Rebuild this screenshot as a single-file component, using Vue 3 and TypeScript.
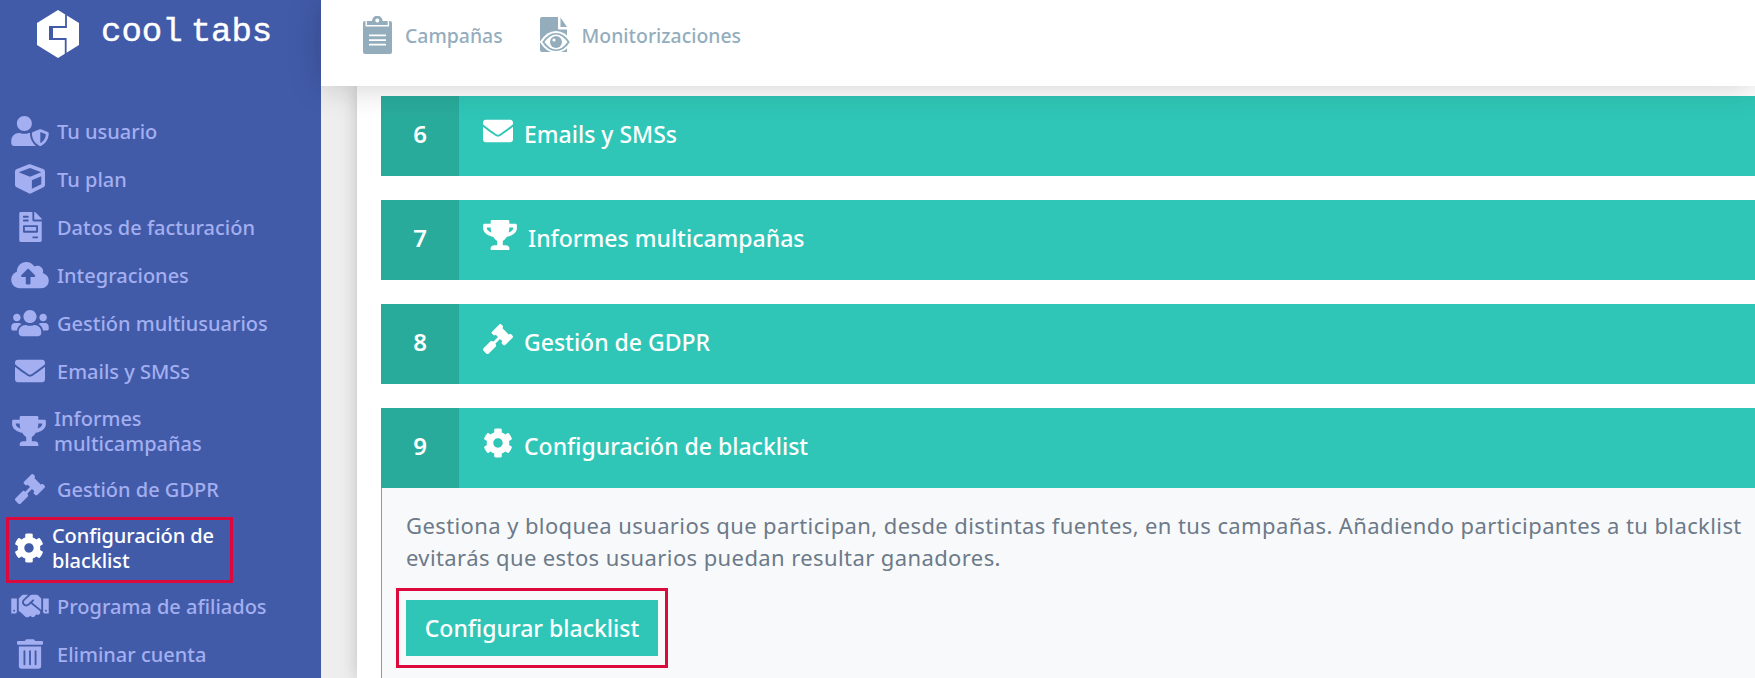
<template>
  <div class="page">
    <aside class="sidebar">
      <div class="logo">
        <svg class="logo-mark" viewBox="0 0 42 48">
          <path fill="#fff" d="M21 0 42 13V35L21 48 0 35V13Z" />
          <path fill="none" stroke="#425ba9" stroke-width="1.8" d="M29 4.500V17H13.500V29H28.700V44" />
          <path fill="#425ba9" d="M12 16H16V30H12Z" />
        </svg>
        <span class="logo-text">cool</span>
        <span class="logo-text second">tabs</span>
      </div>
      <nav class="menu">
        <a
          v-for="item in menu"
          :key="item.label"
          class="menu-item"
          :class="{ active: item.active, double: item.double }"
        >
          <span class="menu-icon">
            <svg :viewBox="`0 0 ${icons[item.icon].w} 512`" :style="{ width: iconWidth(item.icon) + 'px' }">
              <path fill="currentColor" :d="icons[item.icon].d" />
            </svg>
          </span>
          <span class="menu-label" v-html="item.label"></span>
          <span v-if="item.active" class="mark"></span>
        </a>
      </nav>
    </aside>

    <div class="main">
      <header class="topbar">
        <a class="top-link">
          <svg class="top-icon clip" viewBox="0 0 29 38">
            <path fill="#93adbd" fill-rule="evenodd" d="M9 5a5.300 5.300 0 0 1 10.600 0H27a2 2 0 0 1 2 2v29a2 2 0 0 1-2 2H2a2 2 0 0 1-2-2V7a2 2 0 0 1 2-2ZM14.300 2.500a2 2 0 1 0 0 4 2 2 0 0 0 0-4Z" />
            <path fill="none" stroke="#fff" stroke-width="1.400" d="M3.200 5V9.800H25.400V5" />
            <path fill="#fff" d="M6 18.500H23V20.300H6ZM6 23.200H23V25H6ZM6 27.800H23V29.600H6Z" />
          </svg>
          Campañas
        </a>
        <a class="top-link">
          <svg class="top-icon doc" viewBox="0 0 32 38">
            <path fill="#93adbd" d="M2 1H18V12.500a1 1 0 0 0 1 1H27V36H2a2 2 0 0 1-2-2V3a2 2 0 0 1 2-2Z" />
            <path fill="#93adbd" d="M20.500 1.500 27 11H20.500Z" />
            <path fill="#93adbd" stroke="#fff" stroke-width="2" d="M1 26C5 19.500 10 16 16 16S27 19.500 31 26C27 32.500 22 36 16 36S5 32.500 1 26Z" />
            <path fill="#fff" d="M4.500 26C8 21 12 18.500 16 18.500S24 21 27.500 26C24 31 20 33.500 16 33.500S8 31 4.500 26Z" />
            <circle cx="16" cy="26" r="6" fill="#93adbd" />
            <circle cx="14" cy="24" r="1.600" fill="#fff" />
          </svg>
          Monitorizaciones
        </a>
      </header>

      <div class="body">
        <div class="gutter"></div>
        <section class="content">
          <div v-for="step in steps" :key="step.num" class="step">
            <div class="step-num">{{ step.num }}</div>
            <div class="step-title">
              <svg :viewBox="`0 0 ${icons[step.icon].w} 512`" :style="{ width: iconWidth(step.icon) + 'px' }">
                <path fill="#fff" :d="icons[step.icon].d" />
              </svg>
              <span>{{ step.title }}</span>
            </div>
          </div>
          <div class="panel">
            <p class="panel-text">
              Gestiona y bloquea usuarios que participan, desde distintas fuentes, en tus campañas. Añadiendo participantes a tu blacklist<br />evitarás que estos usuarios puedan resultar ganadores.
            </p>
            <div class="btn-mark">
              <button class="btn">Configurar blacklist</button>
            </div>
          </div>
        </section>
      </div>
    </div>
  </div>
</template>

<script setup lang="ts">
interface Icon { w: number; d: string }

const icons: Record<string, Icon> = {
  userShield: { w: 640, d: 'M622.3 271.1l-115.2-45c-4.1-1.6-12.6-3.7-22.2 0l-115.2 45c-10.7 4.2-17.7 14-17.7 24.9 0 111.6 68.7 188.8 132.9 213.9 9.6 3.7 18 1.6 22.2 0C558.4 489.9 640 420.5 640 296c0-10.9-7-20.7-17.7-24.9zM496 462.4V273.3l95.5 37.3c-5.6 87.1-60.9 135.4-95.5 151.8zM224 256c70.7 0 128-57.3 128-128S294.7 0 224 0 96 57.3 96 128s57.3 128 128 128zm96 40c0-2.5.8-4.7 1.1-7.2-2.5-.1-4.9-.8-7.5-.8h-16.7c-22.2 10.2-46.9 16-72.9 16s-50.6-5.8-72.9-16h-16.7C60.2 288 0 348.2 0 422.4V464c0 26.5 21.5 48 48 48h352c6.8 0 13.3-1.5 19.2-4-54-42.9-99.2-116.7-99.2-212z' },
  cube: { w: 512, d: 'M239.1 6.3l-208 78c-18.7 7-31.1 25-31.1 45v225.1c0 18.2 10.3 34.8 26.5 42.9l208 104c13.5 6.8 29.4 6.8 42.9 0l208-104c16.3-8.1 26.5-24.8 26.5-42.9V129.3c0-20-12.4-37.9-31.1-44.9l-208-78C262 2.2 250 2.2 239.1 6.3zM256 68.4l192 72v1.1l-192 78-192-78v-1.1l192-72zm32 356V275.5l160-65v133.9l-160 80z' },
  invoice: { w: 384, d: 'M288 256H96v64h192v-64zm89-151L279.1 7c-4.5-4.5-10.6-7-17-7H256v128h128v-6.1c0-6.3-2.5-12.4-7-16.9zm-153 31V0H24C10.7 0 0 10.7 0 24v464c0 13.3 10.7 24 24 24h336c13.3 0 24-10.7 24-24V160H248c-13.2 0-24-10.8-24-24zM64 72c0-4.42 3.58-8 8-8h80c4.42 0 8 3.58 8 8v16c0 4.42-3.58 8-8 8H72c-4.42 0-8-3.58-8-8V72zm0 64c0-4.42 3.58-8 8-8h80c4.42 0 8 3.58 8 8v16c0 4.42-3.58 8-8 8H72c-4.42 0-8-3.58-8-8v-16zm256 304c0 4.42-3.58 8-8 8h-80c-4.42 0-8-3.58-8-8v-16c0-4.42 3.58-8 8-8h80c4.42 0 8 3.58 8 8v16zm0-200v96c0 8.84-7.16 16-16 16H80c-8.84 0-16-7.16-16-16v-96c0-8.84 7.16-16 16-16h224c8.84 0 16 7.16 16 16z' },
  cloud: { w: 640, d: 'M537.6 226.6c4.1-10.7 6.4-22.4 6.4-34.6 0-53-43-96-96-96-19.7 0-38.1 6-53.3 16.2C367 64.2 315.3 32 256 32c-88.4 0-160 71.6-160 160 0 2.7.1 5.4.2 8.1C40.2 219.8 0 273.2 0 336c0 79.5 64.5 144 144 144h368c70.7 0 128-57.3 128-128 0-61.9-44-113.6-102.4-125.4zM393.4 288H328v112c0 8.8-7.2 16-16 16h-48c-8.8 0-16-7.2-16-16V288h-65.4c-14.3 0-21.4-17.2-11.3-27.3l105.4-105.4c6.2-6.2 16.4-6.2 22.6 0l105.4 105.4c10.1 10.1 2.9 27.3-11.3 27.3z' },
  users: { w: 640, d: 'M96 224c35.3 0 64-28.7 64-64s-28.7-64-64-64-64 28.7-64 64 28.7 64 64 64zm448 0c35.3 0 64-28.7 64-64s-28.7-64-64-64-64 28.7-64 64 28.7 64 64 64zm32 32h-64c-17.6 0-33.5 7.1-45.1 18.6 40.3 22.1 68.9 62 75.1 109.4h66c17.7 0 32-14.3 32-32v-32c0-35.3-28.7-64-64-64zm-256 0c61.9 0 112-50.1 112-112S381.9 32 320 32 208 82.1 208 144s50.1 112 112 112zm76.8 32h-8.3c-20.8 10-43.9 16-68.5 16s-47.6-6-68.5-16h-8.3C179.6 288 128 339.6 128 403.2V432c0 26.5 21.5 48 48 48h288c26.5 0 48-21.5 48-48v-28.8c0-63.6-51.6-115.2-115.2-115.2zm-223.7-13.4C161.5 263.1 145.6 256 128 256H64c-35.3 0-64 28.7-64 64v32c0 17.7 14.3 32 32 32h65.9c6.3-47.4 34.9-87.3 75.2-109.4z' },
  envelope: { w: 512, d: 'M502.3 190.8c3.9-3.1 9.7-.2 9.7 4.7V400c0 26.5-21.5 48-48 48H48c-26.5 0-48-21.5-48-48V195.6c0-5 5.7-7.8 9.7-4.7 22.4 17.4 52.1 39.5 154.1 113.6 21.1 15.4 56.7 47.8 92.2 47.6 35.7.3 72-32.8 92.3-47.6 102-74.1 131.6-96.3 154-113.7zM256 320c23.2.4 56.6-29.2 73.4-41.4 132.7-96.3 142.8-104.7 173.4-128.7 5.8-4.5 9.2-11.5 9.2-18.9v-19c0-26.5-21.5-48-48-48H48C21.5 64 0 85.5 0 112v19c0 7.4 3.4 14.3 9.2 18.9 30.6 23.9 40.7 32.4 173.4 128.7 16.8 12.2 50.2 41.8 73.4 41.4z' },
  trophy: { w: 576, d: 'M552 64H448V24c0-13.3-10.7-24-24-24H152c-13.3 0-24 10.7-24 24v40H24C10.7 64 0 74.7 0 88v56c0 35.7 22.5 72.4 61.9 100.7 31.5 22.7 69.8 37.1 110 41.7C203.3 338.5 240 360 240 360v72h-48c-35.3 0-64 20.7-64 56v12c0 6.6 5.4 12 12 12h296c6.6 0 12-5.4 12-12v-12c0-35.3-28.7-56-64-56h-48v-72s36.7-21.5 68.1-73.6c40.3-4.6 78.6-19 110-41.7 39.3-28.3 61.9-65 61.9-100.7V88c0-13.3-10.7-24-24-24zM99.3 192.8C74.9 175.2 64 155.6 64 144v-16h64.2c1 32.6 5.8 61.2 12.8 86.2-15.1-5.2-29.2-12.4-41.7-21.4zM512 144c0 16.1-17.7 36.1-35.3 48.8-12.5 9-26.7 16.2-41.8 21.4 7-25 11.8-53.6 12.8-86.2H512v16z' },
  gavel: { w: 512, d: 'M504.971 199.362l-22.627-22.627c-9.373-9.373-24.569-9.373-33.941 0l-5.657 5.657L329.608 69.255l5.657-5.657c9.373-9.373 9.373-24.569 0-33.941L312.638 7.029c-9.373-9.373-24.569-9.373-33.941 0L154.246 131.48c-9.373 9.373-9.373 24.569 0 33.941l22.627 22.627c9.373 9.373 24.569 9.373 33.941 0l5.657-5.657 39.598 39.598-81.04 81.04-5.657-5.657c-12.497-12.497-32.758-12.497-45.255 0L9.373 412.118c-12.497 12.497-12.497 32.758 0 45.255l45.255 45.255c12.497 12.497 32.758 12.497 45.255 0l114.745-114.745c12.497-12.497 12.497-32.758 0-45.255l-5.657-5.657 81.04-81.04 39.598 39.598-5.657 5.657c-9.373 9.373-9.373 24.569 0 33.941l22.627 22.627c9.373 9.373 24.569 9.373 33.941 0l124.451-124.451c9.372-9.372 9.372-24.568 0-33.941z' },
  cog: { w: 512, d: 'M487.4 315.7l-42.6-24.6c4.3-23.2 4.3-47 0-70.2l42.6-24.6c4.9-2.8 7.1-8.6 5.5-14-11.1-35.6-30-67.8-54.7-94.6-3.8-4.1-10-5.1-14.8-2.3L380.8 110c-17.9-15.4-38.5-27.3-60.8-35.1V25.8c0-5.6-3.9-10.5-9.4-11.7-36.7-8.2-74.3-7.8-109.2 0-5.5 1.2-9.4 6.1-9.4 11.7V75c-22.2 7.9-42.8 19.8-60.8 35.1L88.7 85.5c-4.9-2.8-11-1.9-14.8 2.3-24.7 26.7-43.6 58.9-54.7 94.6-1.7 5.4.6 11.2 5.5 14L67.3 221c-4.3 23.2-4.3 47 0 70.2l-42.6 24.6c-4.9 2.8-7.1 8.6-5.5 14 11.1 35.6 30 67.8 54.7 94.6 3.8 4.1 10 5.1 14.8 2.3l42.6-24.6c17.9 15.4 38.5 27.3 60.8 35.1v49.2c0 5.6 3.9 10.5 9.4 11.7 36.7 8.2 74.3 7.8 109.2 0 5.5-1.2 9.4-6.1 9.4-11.7v-49.2c22.2-7.9 42.8-19.8 60.8-35.1l42.6 24.6c4.9 2.8 11 1.9 14.8-2.3 24.7-26.7 43.6-58.9 54.7-94.6 1.5-5.5-.7-11.3-5.6-14.1zM256 336c-44.1 0-80-35.9-80-80s35.9-80 80-80 80 35.9 80 80-35.9 80-80 80z' },
  handshake: { w: 640, d: 'M434.7 64h-85.9c-8 0-15.7 3-21.6 8.4l-98.3 90c-.1.1-.2.3-.3.4-16.6 15.6-16.3 40.5-2.1 56 12.7 13.9 39.4 17.6 56.1 2.7.1-.1.3-.1.4-.2l79.9-73.2c6.5-5.9 16.7-5.5 22.6 1 6 6.5 5.5 16.6-1 22.6l-26.1 23.9L504 313.8c2.9 2.4 5.5 5 7.9 7.7V128l-54.6-54.6c-5.9-6-14.1-9.4-22.6-9.4zM544 128.2v223.9c0 17.7 14.3 32 32 32h64V128.2h-96zm48 223.9c-8.8 0-16-7.2-16-16s7.2-16 16-16 16 7.2 16 16-7.2 16-16 16zM0 384h64c17.7 0 32-14.3 32-32V128.2H0V384zm48-63.9c8.8 0 16 7.2 16 16s-7.2 16-16 16-16-7.2-16-16c0-8.9 7.2-16 16-16zm435.9 18.6L334.6 217.5l-30 27.5c-29.7 27.1-75.2 24.5-101.7-4.4-26.9-29.4-24.8-74.9 4.4-101.7L289.1 64h-83.8c-8.5 0-16.6 3.4-22.6 9.4L128 128v223.9h18.3l90.5 81.9c27.4 22.3 67.7 18.1 90-9.3l.2-.2 17.9 15.5c15.9 13 39.4 10.5 52.3-5.4l31.4-38.6 5.4 4.4c13.7 11.1 33.9 9.1 45-4.7l9.5-11.7c11.2-13.8 9.1-33.9-4.6-45.1z' },
  trash: { w: 448, d: 'M32 464a48 48 0 0 0 48 48h288a48 48 0 0 0 48-48V128H32zm272-256a16 16 0 0 1 32 0v224a16 16 0 0 1-32 0zm-96 0a16 16 0 0 1 32 0v224a16 16 0 0 1-32 0zm-96 0a16 16 0 0 1 32 0v224a16 16 0 0 1-32 0zM432 32H312l-9.4-18.7A24 24 0 0 0 281.1 0H166.8a23.72 23.72 0 0 0-21.4 13.3L136 32H16A16 16 0 0 0 0 48v32a16 16 0 0 0 16 16h416a16 16 0 0 0 16-16V48a16 16 0 0 0-16-16z' },
}

const iconWidth = (name: string) => Math.round((icons[name].w / 512) * 30)

const menu = [
  { label: 'Tu usuario', icon: 'userShield' },
  { label: 'Tu plan', icon: 'cube' },
  { label: 'Datos de facturación', icon: 'invoice' },
  { label: 'Integraciones', icon: 'cloud' },
  { label: 'Gestión multiusuarios', icon: 'users' },
  { label: 'Emails y SMSs', icon: 'envelope' },
  { label: 'Informes<br>multicampañas', icon: 'trophy', double: true },
  { label: 'Gestión de GDPR', icon: 'gavel' },
  { label: 'Configuración de<br>blacklist', icon: 'cog', double: true, active: true },
  { label: 'Programa de afiliados', icon: 'handshake' },
  { label: 'Eliminar cuenta', icon: 'trash' },
]

const steps = [
  { num: 6, icon: 'envelope', title: 'Emails y SMSs' },
  { num: 7, icon: 'trophy', title: 'Informes multicampañas' },
  { num: 8, icon: 'gavel', title: 'Gestión de GDPR' },
  { num: 9, icon: 'cog', title: 'Configuración de blacklist' },
]
</script>

<style>
html, body { margin: 0; height: 100%; overflow: hidden; }
</style>

<style scoped>
.page {
  display: flex;
  height: 678px;
  overflow: hidden;
  font-family: 'Noto Sans', 'Liberation Sans', sans-serif;
}
.sidebar {
  width: 321px;
  flex: none;
  background: #425ba9;
}
.logo {
  display: flex;
  align-items: center;
  height: 107px;
  padding: 0 0 39px 37px;
  box-sizing: border-box;
}
.logo-mark { width: 42px; height: 48px; margin-right: 22px; flex: none; }
.logo-text {
  font-family: 'Liberation Mono', monospace;
  font-size: 34px;
  color: #fff;
  -webkit-text-stroke: 0.4px #fff;
  position: relative;
  top: -2px;
}
.logo-text.second { margin-left: 8px; }
.menu { display: flex; flex-direction: column; }
.menu-item {
  position: relative;
  display: flex;
  align-items: center;
  height: 48px;
  padding-left: 11px;
  color: #a3aff0;
  font-size: 20px;
  font-weight: 500;
  line-height: 25px;
}
.menu-item.double {
  height: 70px;
  padding-top: 2px;
  box-sizing: border-box;
}
.menu-item.active {
  height: 69px;
  padding-top: 0;
  color: #fff;
  letter-spacing: -0.1px;
}
.menu-icon {
  width: 38px;
  margin-right: 8px;
  flex: none;
  display: flex;
  justify-content: center;
}
.double .menu-icon { width: 34px; margin-left: 1px; }
.active .menu-icon { margin-right: 6px; }
.menu-icon svg { height: 30px; display: block; }
.mark {
  position: absolute;
  left: 6px;
  top: 4px;
  width: 227px;
  height: 66px;
  box-sizing: border-box;
  border: 3px solid #dc0a3c;
}
.main {
  flex: 1;
  min-width: 0;
  display: flex;
  flex-direction: column;
}
.topbar {
  position: relative;
  z-index: 2;
  height: 86px;
  flex: none;
  display: flex;
  align-items: center;
  padding: 0 0 16px 42px;
  box-sizing: border-box;
  background: #fff;
  box-shadow: 0 0 34px rgba(0, 0, 0, 0.2);
}
.top-link {
  display: flex;
  align-items: center;
  margin-right: 37px;
  color: #93adbd;
  font-size: 19.4px;
  font-weight: 500;
}
.top-icon { height: 38px; flex: none; }
.top-icon.clip { width: 29px; margin-right: 13px; }
.top-icon.doc { width: 32px; margin-right: 10px; }
.body {
  flex: 1;
  display: flex;
  min-height: 0;
  background: #eee;
}
.gutter { width: 36px; flex: none; }
.content {
  flex: 1;
  min-width: 0;
  padding: 10px 0 0 24px;
  background: #fff;
  box-shadow: 0 0 16px rgba(0, 0, 0, 0.2);
}
.step {
  display: flex;
  height: 80px;
  margin-bottom: 24px;
  background: #2fc6b7;
}
.step:nth-last-child(2) { margin-bottom: 0; }
.step-num {
  width: 78px;
  flex: none;
  display: flex;
  align-items: center;
  justify-content: center;
  padding-bottom: 5px;
  box-sizing: border-box;
  background: #29ab9b;
  color: #fff;
  font-size: 24px;
  font-weight: 600;
}
.step-title {
  display: flex;
  align-items: center;
  gap: 11px;
  padding: 0 0 4px 24px;
  color: #fff;
  font-size: 23px;
  font-weight: 500;
}
.step-title svg { height: 30px; display: block; margin-bottom: 6px; }
.panel {
  height: 190px;
  padding: 21px 0 0 24px;
  box-sizing: border-box;
  border-left: 1px solid #2fc6b7;
  background: #f8f9fb;
}
.panel-text {
  margin: 0 0 15px;
  color: #6c7a89;
  font-size: 22px;
  letter-spacing: 0.4px;
  line-height: 32px;
  white-space: nowrap;
}
.btn-mark {
  display: inline-block;
  margin-left: -10px;
  padding: 9px 7px;
  border: 3px solid #dc0a3c;
}
.btn {
  display: block;
  width: 252px;
  height: 56px;
  padding: 0;
  border: 0;
  background: #2fc6b7;
  color: #fff;
  font-family: inherit;
  font-size: 23px;
  font-weight: 500;
}
</style>
